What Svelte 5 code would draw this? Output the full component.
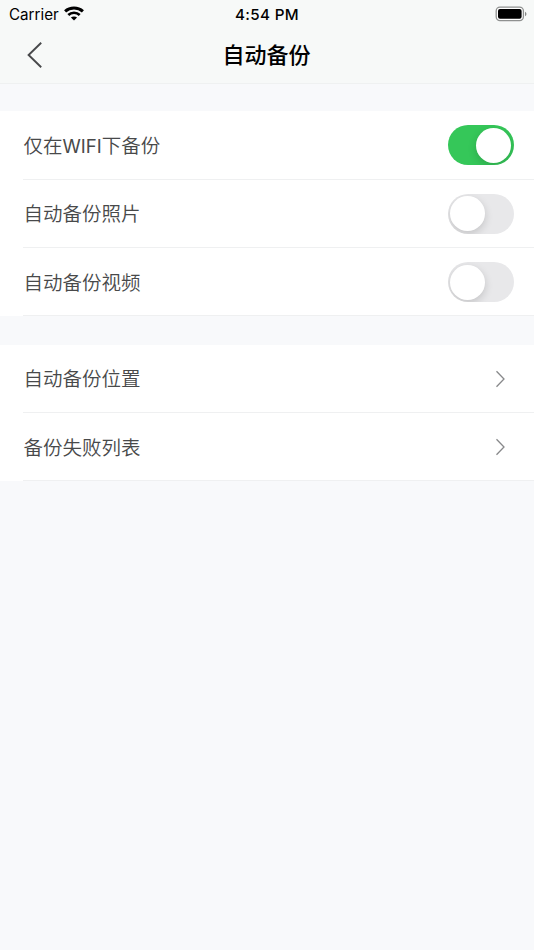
<script>
  let switches = $state([
    { label: ["仅在", "WIFI", "下备份"], on: true },
    { label: ["自动备份照片"], on: false },
    { label: ["自动备份视频"], on: false },
  ]);

  const links = ["自动备份位置", "备份失败列表"];
</script>

<div class="screen">
  <header>
    <div class="status">
      <div class="carrier">
        <span>Carrier</span>
        <svg class="wifi" width="20" height="15" viewBox="0 0 20 15" fill="none" stroke="#000">
          <path d="M1.1 5.3C6 .8 14 .8 18.9 5.3" stroke-width="3" />
          <path d="M4.3 8.9C7.4 6 12.6 6 15.7 8.9" stroke-width="2.7" />
          <path d="M10 14.6L6.9 11.6C8.5 10 11.5 10 13.1 11.6Z" fill="#000" stroke="none" />
        </svg>
      </div>
      <span class="time">4:54 PM</span>
      <svg class="battery" width="32" height="16" viewBox="0 0 32 16">
        <rect x="1.2" y="1.2" width="27.2" height="13.4" rx="3.8" fill="#fff" stroke="#8f9190" stroke-width="1.3" />
        <rect x="3" y="3" width="23.6" height="9.8" rx="2" fill="#000" />
        <path d="M30 5.8C32 6.6 32 9.4 30 10.2Z" fill="#858786" />
      </svg>
    </div>
    <div class="nav">
      <button class="back" aria-label="返回">
        <svg width="16" height="28" viewBox="0 0 16 28">
          <path d="M14.2 1.8L1.6 14L14.2 26.2" fill="none" stroke="#48494b" stroke-width="1.9" />
        </svg>
      </button>
      <h1>自动备份</h1>
    </div>
  </header>

  <section>
    {#each switches as item}
      <div class="row">
        <span class="label">
          {#each item.label as part}<span class:latin={part === "WIFI"}>{part}</span>{/each}
        </span>
        <button
          class="switch"
          class:on={item.on}
          role="switch"
          aria-checked={item.on}
          aria-label={item.label.join("")}
          onclick={() => (item.on = !item.on)}
        >
          <span class="knob"></span>
        </button>
      </div>
    {/each}
  </section>

  <section>
    {#each links as label}
      <div class="row">
        <span class="label">{label}</span>
        <svg class="arrow" width="11" height="18" viewBox="0 0 11 18">
          <path d="M1.5 1.3L9 9L1.5 16.7" fill="none" stroke="#88898b" stroke-width="1.3" />
        </svg>
      </div>
    {/each}
  </section>
</div>

<style>
  :global(body) {
    background: #f8f9fb;
  }

  .screen {
    min-height: 950px;
    font-family: Inter, "Noto Sans CJK SC", sans-serif;
    background: #f8f9fb;
  }

  button {
    padding: 0;
    border: 0;
    background: none;
  }

  svg {
    display: block;
  }

  header {
    box-sizing: border-box;
    height: 84px;
    background: #f7f9f8;
    border-bottom: 1px solid #eff1f1;
  }

  .status {
    display: grid;
    grid-template-columns: 1fr auto 1fr;
    align-items: center;
    height: 27px;
    padding: 0 7px 0 9px;
    color: #000;
    font-size: 15.2px;
    line-height: 29px;
  }

  .carrier {
    display: flex;
    align-items: center;
    gap: 5px;
  }

  .wifi {
    margin-bottom: 3px;
  }

  .time {
    margin-right: 2px;
    font-weight: 550;
    letter-spacing: 0.35px;
  }

  .battery {
    justify-self: end;
    margin-top: -2px;
  }

  .nav {
    display: grid;
    grid-template-columns: 1fr auto 1fr;
    align-items: center;
    height: 56px;
    padding: 0 27px;
  }

  h1 {
    margin: 0 1px 0 0;
    color: #000;
    font-size: 22px;
    font-weight: 500;
    line-height: 56px;
  }

  section {
    margin-top: 27.2px;
    padding-left: 23.4px;
    background: #fff;
  }

  section + section {
    margin-top: 28.2px;
  }

  .row {
    display: flex;
    align-items: center;
    justify-content: space-between;
    box-sizing: border-box;
    height: 68.4px;
    padding: 1px 20.5px 0 0;
    border-bottom: 1px solid #eff0f1;
  }

  .label {
    padding-top: 1px;
    color: #48494a;
    font-size: 19.5px;
    font-weight: 350;
    line-height: 28px;
    white-space: nowrap;
  }

  .latin {
    font-size: 18.6px;
    font-weight: 400;
  }

  .switch {
    box-sizing: border-box;
    width: 66px;
    height: 40px;
    padding: 2.5px;
    border-radius: 20px;
    background: #e8e8ea;
    overflow: hidden;
  }

  .switch.on {
    background: #35c759;
  }

  .knob {
    display: block;
    width: 35px;
    height: 35px;
    border-radius: 50%;
    background: #fff;
    box-shadow: 0 3px 8px rgba(0, 0, 0, 0.16);
  }

  .on .knob {
    margin-left: 26px;
  }

  .arrow {
    margin-right: 7.5px;
  }
</style>
